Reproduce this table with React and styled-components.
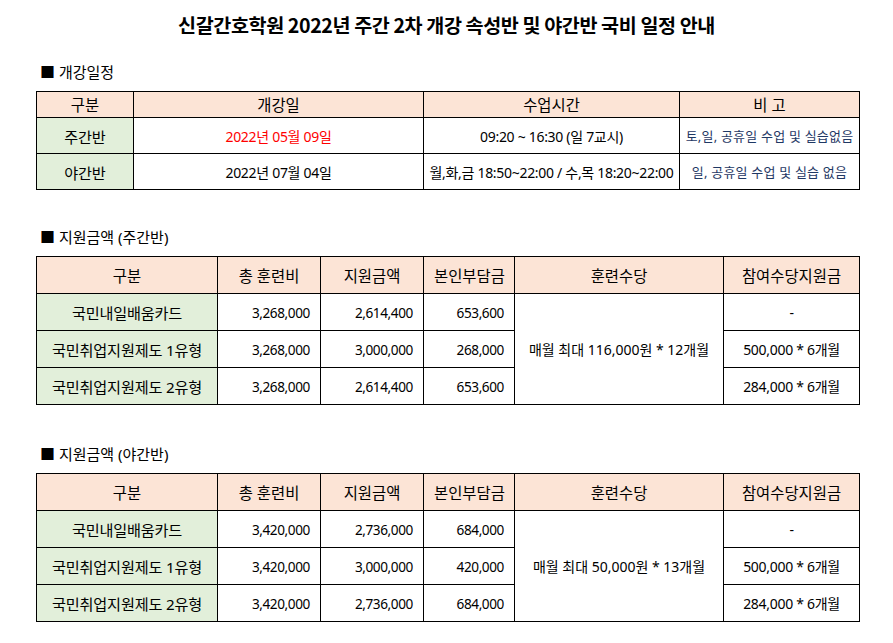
import React from 'react'
import styled, {createGlobalStyle} from 'styled-components'

const GlobalStyle = createGlobalStyle`
  body {
    margin: 0;
    background: #fff;
    font-family: "Noto Sans", "Noto Sans CJK KR", sans-serif;
    color: #000;
  }
`

const Page = styled.div`
  width: 893px;
  padding: 11px 0 0 36px;
  box-sizing: border-box;
`

const Title = styled.h1`
  margin: 0 0 23px -36px;
  width: 893px;
  text-align: center;
  font-size: 19.6px;
  line-height: 28px;
  font-weight: 700;
  letter-spacing: -0.4px;
  font-family: "Noto Sans CJK KR", sans-serif;
`

const Section = styled.section`
  margin-bottom: ${props => props.gap || 0}px;
`

const SectionTitle = styled.h2`
  margin: 0 0 9px 4px;
  font-size: 15px;
  line-height: 20px;
  font-weight: 400;
  letter-spacing: 0;
`

const Table = styled.table`
  border-collapse: collapse;
  table-layout: fixed;
  width: 823px;
  font-size: 14px;
  letter-spacing: -0.3px;

  td, th {
    border: 1px solid #000;
    padding: 0 10px;
    white-space: nowrap;
    overflow: visible;
  }
`

const Row = styled.tr`
  height: ${props => props.h}px;
`

const Th = styled.th`
  background: #fce4d6;
  font-weight: 400;
  font-size: 15.4px;
  letter-spacing: 0;
  text-align: center;
`

const Label = styled.td`
  background: #e2efda;
  text-align: center;
  font-size: 15.2px;
  letter-spacing: -0.2px;
`

const Cell = styled.td`
  text-align: ${props => props.align || 'center'};
  color: ${props => props.color || '#000'};
  padding: ${props => props.tight ? '0 !important' : '0 10px'};
  letter-spacing: ${props => props.spacing ?? -0.3}px;
`

const Amount = styled.td`
  text-align: right;
  font-size: 13.6px;
  letter-spacing: -0.4px;
`

const Note = styled(Cell)`
  color: #1f3864;
  font-size: 13px;
  letter-spacing: 0.2px;
`

const Schedule = () => (
  <Table>
    <colgroup>
      <col style={{width: 97}}/>
      <col style={{width: 290}}/>
      <col style={{width: 256}}/>
      <col style={{width: 180}}/>
    </colgroup>
    <tbody>
      <Row h={26}>
        <Th>구분</Th>
        <Th>개강일</Th>
        <Th>수업시간</Th>
        <Th>비 고</Th>
      </Row>
      <Row h={36}>
        <Label>주간반</Label>
        <Cell color="#ff0000">2022년 05월 09일</Cell>
        <Cell>09:20 ~ 16:30 (일 7교시)</Cell>
        <Note tight>토,일, 공휴일 수업 및 실습없음</Note>
      </Row>
      <Row h={36}>
        <Label>야간반</Label>
        <Cell>2022년 07월 04일</Cell>
        <Cell tight>월,화,금 18:50~22:00 / 수,목 18:20~22:00</Cell>
        <Note tight>일, 공휴일 수업 및 실습 없음</Note>
      </Row>
    </tbody>
  </Table>
)

const FundTable = ({rows, allowance}) => (
  <Table>
    <colgroup>
      <col style={{width: 181}}/>
      <col style={{width: 103}}/>
      <col style={{width: 103}}/>
      <col style={{width: 91}}/>
      <col style={{width: 209}}/>
      <col style={{width: 136}}/>
    </colgroup>
    <tbody>
      <Row h={37}>
        <Th>구분</Th>
        <Th>총 훈련비</Th>
        <Th>지원금액</Th>
        <Th>본인부담금</Th>
        <Th>훈련수당</Th>
        <Th>참여수당지원금</Th>
      </Row>
      {rows.map((r, idx) => (
        <Row h={37} key={idx}>
          <Label>{r.name}</Label>
          <Amount>{r.total}</Amount>
          <Amount>{r.support}</Amount>
          <Amount>{r.self}</Amount>
          {idx === 0 ? <Cell rowSpan={3} spacing={0}>{allowance}</Cell> : null}
          <Cell>{r.extra}</Cell>
        </Row>
      ))}
    </tbody>
  </Table>
)

const dayRows = [
  {name: '국민내일배움카드', total: '3,268,000', support: '2,614,400', self: '653,600', extra: '-'},
  {name: '국민취업지원제도 1유형', total: '3,268,000', support: '3,000,000', self: '268,000', extra: '500,000 * 6개월'},
  {name: '국민취업지원제도 2유형', total: '3,268,000', support: '2,614,400', self: '653,600', extra: '284,000 * 6개월'},
]

const nightRows = [
  {name: '국민내일배움카드', total: '3,420,000', support: '2,736,000', self: '684,000', extra: '-'},
  {name: '국민취업지원제도 1유형', total: '3,420,000', support: '3,000,000', self: '420,000', extra: '500,000 * 6개월'},
  {name: '국민취업지원제도 2유형', total: '3,420,000', support: '2,736,000', self: '684,000', extra: '284,000 * 6개월'},
]

const App = () => (
  <Page>
    <GlobalStyle/>
    <Title>신갈간호학원 2022년 주간 2차 개강 속성반 및 야간반 국비 일정 안내</Title>

    <Section gap={37}>
      <SectionTitle>■ 개강일정</SectionTitle>
      <Schedule/>
    </Section>

    <Section gap={39}>
      <SectionTitle>■ 지원금액 (주간반)</SectionTitle>
      <FundTable rows={dayRows} allowance="매월 최대 116,000원 * 12개월"/>
    </Section>

    <Section>
      <SectionTitle>■ 지원금액 (야간반)</SectionTitle>
      <FundTable rows={nightRows} allowance="매월 최대 50,000원 * 13개월"/>
    </Section>
  </Page>
)

export default App
